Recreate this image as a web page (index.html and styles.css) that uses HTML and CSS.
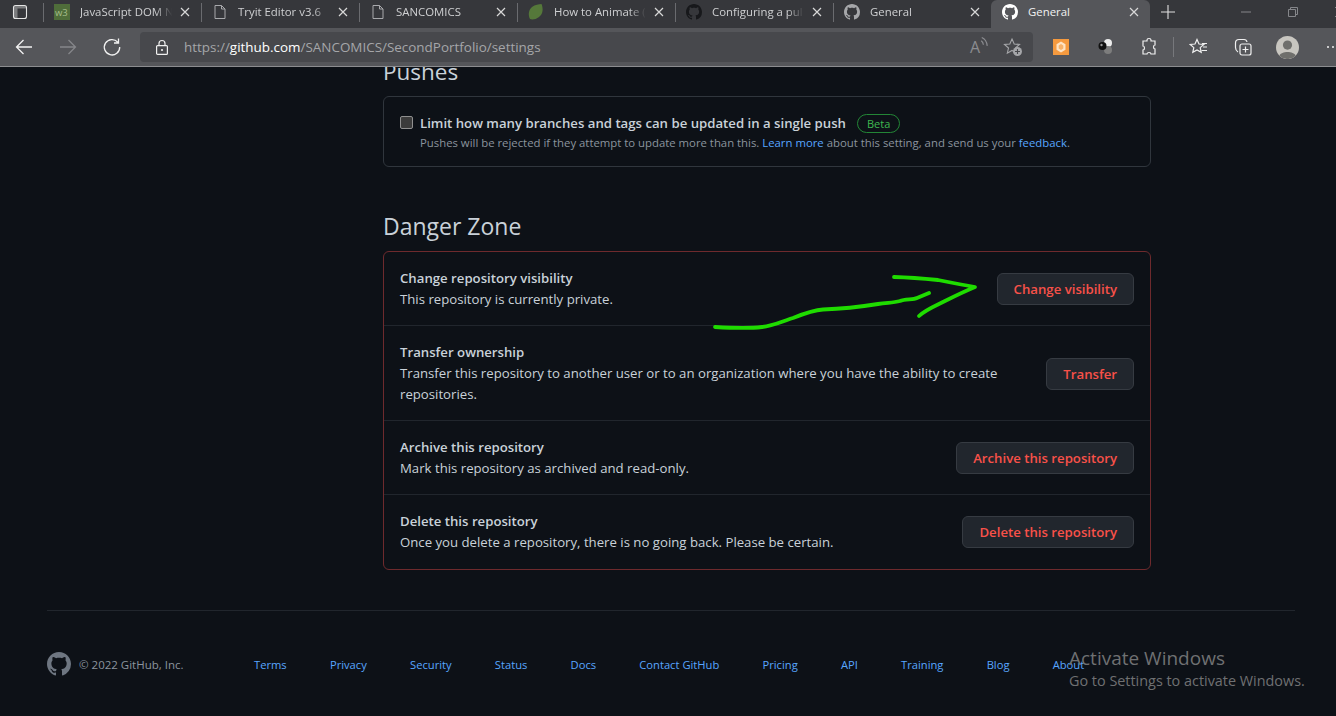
FILE: index.html
```html
<!DOCTYPE html>
<html lang="en">
<head>
<meta charset="utf-8">
<title>General</title>
<link rel="stylesheet" href="styles.css">
</head>
<body>
<svg class="defs" width="0" height="0" aria-hidden="true">
  <symbol id="gh" viewBox="0 0 16 16"><path fill="currentColor" d="M8 0C3.58 0 0 3.58 0 8c0 3.54 2.29 6.53 5.47 7.59.4.07.55-.17.55-.38 0-.19-.01-.82-.01-1.49-2.01.37-2.53-.49-2.69-.94-.09-.23-.48-.94-.82-1.13-.28-.15-.68-.52-.01-.53.63-.01 1.08.58 1.23.82.72 1.21 1.87.87 2.33.66.07-.52.28-.87.51-1.07-1.78-.2-3.64-.89-3.64-3.95 0-.87.31-1.59.82-2.15-.08-.2-.36-1.02.08-2.12 0 0 .67-.21 2.2.82.64-.18 1.32-.27 2-.27.68 0 1.36.09 2 .27 1.53-1.04 2.2-.82 2.2-.82.44 1.1.16 1.92.08 2.12.51.56.82 1.27.82 2.15 0 3.07-1.87 3.75-3.65 3.95.29.25.54.73.54 1.48 0 1.07-.01 1.93-.01 2.2 0 .21.15.46.55.38A8.013 8.013 0 0016 8c0-4.42-3.58-8-8-8z"/></symbol>
  <symbol id="doc" viewBox="0 0 16 16"><path fill="none" stroke="currentColor" d="M3 1.500h6.500L13 5v9.500H3zM9.500 1.500V5H13"/></symbol>
  <symbol id="x" viewBox="0 0 10 10"><path fill="none" stroke="currentColor" stroke-width="1.200" d="M1 1l8 8M9 1l-8 8"/></symbol>
</svg>

<header class="chrome">
  <div class="tabstrip">
    <div class="strip-start">
      <svg class="ico16" viewBox="0 0 16 16"><rect x="1.500" y="1.500" width="13" height="13" rx="2" fill="none" stroke="#e4e4e4" stroke-width="1.100"/><path d="M2 2h12v2.500H5.500V14H2z" fill="#e4e4e4" opacity=".4"/></svg>
    </div>
    <div class="tab">
      <svg class="ico16" viewBox="0 0 16 16"><rect width="16" height="16" fill="#4f6d3a"/><text x="1" y="11.500" class="w3">w3</text></svg>
      <span class="tab-title">JavaScript DOM N</span>
      <svg class="tab-x"><use href="#x"/></svg>
    </div>
    <div class="tab">
      <svg class="ico16 muted"><use href="#doc"/></svg>
      <span class="tab-title">Tryit Editor v3.6</span>
      <svg class="tab-x"><use href="#x"/></svg>
    </div>
    <div class="tab">
      <svg class="ico16 muted"><use href="#doc"/></svg>
      <span class="tab-title">SANCOMICS</span>
      <svg class="tab-x"><use href="#x"/></svg>
    </div>
    <div class="tab">
      <svg class="ico16" viewBox="0 0 16 16"><path d="M13.500 0C15.500 5 15 10 11 13 8 15.500 4 16 2 15 0 11 .5 6 4 3 7 .5 11 .5 13.500 0z" fill="#55783a"/></svg>
      <span class="tab-title">How to Animate (</span>
      <svg class="tab-x"><use href="#x"/></svg>
    </div>
    <div class="tab">
      <svg class="ico16 gh-dark"><use href="#gh"/></svg>
      <span class="tab-title">Configuring a pul</span>
      <svg class="tab-x"><use href="#x"/></svg>
    </div>
    <div class="tab">
      <svg class="ico16 gh-grey"><use href="#gh"/></svg>
      <span class="tab-title">General</span>
      <svg class="tab-x"><use href="#x"/></svg>
    </div>
    <div class="tab tab-active">
      <svg class="ico16 gh-white"><use href="#gh"/></svg>
      <span class="tab-title">General</span>
      <svg class="tab-x"><use href="#x"/></svg>
    </div>
    <div class="new-tab">
      <svg class="ico16" viewBox="0 0 16 16"><path d="M8 1v14M1 8h14" stroke="#e0e0e0" stroke-width="1.100" fill="none"/></svg>
    </div>
    <div class="win-controls">
      <svg class="ico12" viewBox="0 0 12 12"><path d="M1 6h10" stroke="#85868a"/></svg>
      <svg class="ico12" viewBox="0 0 12 12"><path d="M1.500 3.500h7v7h-7zM3.500 3.500v-2h7v7h-2" stroke="#85868a" fill="none"/></svg>
      <svg class="ico12" viewBox="0 0 12 12"><path d="M1 1l10 10M11 1L1 11" stroke="#85868a" fill="none"/></svg>
    </div>
  </div>

  <div class="toolbar">
    <div class="tool"><svg class="ico20" viewBox="0 0 20 20"><path d="M18 10H2.500M9.500 3l-7 7 7 7" fill="none" stroke="#f2f2f2" stroke-width="1.300"/></svg></div>
    <div class="tool"><svg class="ico20" viewBox="0 0 20 20"><path d="M2 10h15.500M10.500 3l7 7-7 7" fill="none" stroke="#85868a" stroke-width="1.300"/></svg></div>
    <div class="tool"><svg class="ico20" viewBox="0 0 20 20"><path d="M15.800 5.200A7.700 7.700 0 1 0 17.700 10M16.500 1.500v4.500H12" fill="none" stroke="#f2f2f2" stroke-width="1.300"/></svg></div>
    <div class="address">
      <svg class="lock" viewBox="0 0 14 16"><path d="M4 7V4.500a3 3 0 0 1 6 0V7" fill="none" stroke="#f0f0f0" stroke-width="1.200"/><rect x="1.600" y="6.600" width="10.800" height="8.800" rx="1" fill="none" stroke="#f0f0f0" stroke-width="1.200"/><circle cx="7" cy="11" r="1.100" fill="#f0f0f0"/></svg>
      <span class="url"><span class="url-dim">https://</span><span class="url-host">github.com</span><span class="url-dim">/SANCOMICS/SecondPortfolio/settings</span></span>
      <span class="read-aloud">A<svg class="waves" viewBox="0 0 8 10"><path d="M1 3.500c1.200.8 1.800 1.800 2 3.500M1.500.5C4 1.500 6 4 6.500 8" fill="none" stroke="#8b8c90" stroke-width="1.100"/></svg></span>
      <svg class="ico20" viewBox="0 0 20 20"><path d="M9 2l2.200 5 5.300.5-4 3.500 1.200 5.200L9 13.500 4.300 16.200 5.500 11l-4-3.500L6.800 7z" fill="none" stroke="#a5a6a9" stroke-width="1.100"/><circle cx="14.500" cy="14.500" r="4.500" fill="#a5a6a9"/><path d="M14.500 12v5M12 14.500h5" stroke="#47484c" stroke-width="1.100"/></svg>
    </div>
    <div class="tool tool-first"><svg class="ico16" viewBox="0 0 16 16"><rect width="16" height="16" fill="#f59a3f"/><path d="M8 2.500l4.500 2.700v5.600L8 13.500l-4.500-2.700V5.200z" fill="#fde3c4"/><path d="M8 5l2.300 1.500v3L8 11 5.700 9.500v-3z" fill="#f7b26a"/></svg></div>
    <div class="tool"><svg class="ico20" viewBox="0 0 20 20"><circle cx="13" cy="6" r="4" fill="#ececec"/><circle cx="13" cy="13" r="4" fill="#7d7d7d"/><circle cx="7.500" cy="9" r="4" fill="#111"/><circle cx="6.500" cy="8" r="1.200" fill="#999"/></svg></div>
    <div class="tool"><svg class="ico20" viewBox="0 0 20 20"><path d="M8 3c0-2 4-2 4 0v1h4v4c-2 0-2 4 0 4v5h-4c0-2-4-2-4 0H4v-4c2 0 2-4 0-4V4h4z" fill="none" stroke="#f0f0f0" stroke-width="1.200"/></svg></div>
    <span class="tool-sep"></span>
    <div class="tool"><svg class="ico20" viewBox="0 0 20 20"><path d="M8 2.500l2 4.500 4.800.4-3.600 3.200 1 4.700L8 12.900 3.800 15.300l1-4.700L1.200 7.400 6 7z" fill="none" stroke="#f0f0f0" stroke-width="1.200"/><path d="M13 6.500h5M14 10h4M12.500 13.500h5.500" stroke="#f0f0f0" stroke-width="1.100"/></svg></div>
    <div class="tool"><svg class="ico20" viewBox="0 0 20 20"><path d="M5 15C3.500 14 2.500 12.500 2.500 10.500V6A3.500 3.500 0 0 1 6 2.500h5A3 3 0 0 1 14 5" fill="none" stroke="#f0f0f0" stroke-width="1.200"/><rect x="7" y="7" width="11" height="11" rx="2" fill="none" stroke="#f0f0f0" stroke-width="1.200"/><path d="M12.500 9.500v6M9.500 12.500h6" stroke="#f0f0f0" stroke-width="1.200"/></svg></div>
    <div class="tool"><svg class="avatar" viewBox="0 0 24 24"><circle cx="12" cy="12" r="12" fill="#c8c6c0"/><circle cx="12" cy="9.500" r="4.800" fill="#6f6f6c"/><path d="M3.500 20.500c2-5 15-5 17 0A12 12 0 0 1 3.500 20.500z" fill="#6f6f6c"/></svg></div>
    <div class="tool tool-more"><span class="dot"></span><span class="dot"></span><span class="dot"></span></div>
  </div>
</header>

<div class="viewport">
  <main class="content">
    <h2 class="section-title">Pushes</h2>
    <section class="box">
      <div class="push-row">
        <span class="checkbox"></span>
        <div class="push-text">
          <div class="push-label"><strong>Limit how many branches and tags can be updated in a single push</strong><span class="beta">Beta</span></div>
          <p class="note">Pushes will be rejected if they attempt to update more than this. <a href="#">Learn more</a> about this setting, and send us your <a href="#">feedback</a>.</p>
        </div>
      </div>
    </section>

    <h2 class="section-title danger-title">Danger Zone</h2>
    <section class="box danger-box">
      <div class="danger-row">
        <div class="danger-text"><strong>Change repository visibility</strong><p>This repository is currently private.</p></div>
        <button class="btn-danger">Change visibility</button>
      </div>
      <div class="danger-row">
        <div class="danger-text danger-text-wrap"><strong>Transfer ownership</strong><p>Transfer this repository to another user or to an organization where you have the ability to create repositories.</p></div>
        <button class="btn-danger">Transfer</button>
      </div>
      <div class="danger-row">
        <div class="danger-text"><strong>Archive this repository</strong><p>Mark this repository as archived and read-only.</p></div>
        <button class="btn-danger">Archive this repository</button>
      </div>
      <div class="danger-row">
        <div class="danger-text"><strong>Delete this repository</strong><p>Once you delete a repository, there is no going back. Please be certain.</p></div>
        <button class="btn-danger">Delete this repository</button>
      </div>
    </section>
  </main>

  <footer class="footer">
    <div class="footer-brand">
      <svg class="footer-logo"><use href="#gh"/></svg>
      <span>© 2022 GitHub, Inc.</span>
    </div>
    <nav class="footer-links">
      <a href="#">Terms</a><a href="#">Privacy</a><a href="#">Security</a><a href="#">Status</a><a href="#">Docs</a><a href="#">Contact GitHub</a><a href="#">Pricing</a><a href="#">API</a><a href="#">Training</a><a href="#">Blog</a><a href="#">About</a>
    </nav>
  </footer>

  <svg class="scribble" viewBox="0 0 280 60" aria-hidden="true">
    <path d="M2 54 C20 55 40 55 49 54 C60 53 70 48 80 45 C90 41 100 37 110 36.500 C125 36 140 35 165 31 C175 29.500 180 30 187 28 C192 25.500 200 27 204 25 L216 20" />
    <path d="M181 4 C200 4.500 215 6 225 7 C240 10 250 12 262 14 C250 19 240 24 232 28 C222 33 212 37 206 43" />
  </svg>

  <div class="activate">
    <div class="activate-title">Activate Windows</div>
    <div class="activate-sub">Go to Settings to activate Windows.</div>
  </div>
</div>
</body>
</html>
```

FILE: styles.css
```css
* { box-sizing: border-box; }
html, body { margin: 0; height: 100%; }
body {
  display: flex;
  flex-direction: column;
  height: 716px;
  overflow: hidden;
  background: #0d1117;
  color: #c9d1d9;
  font-family: "Open Sans", "Noto Sans", sans-serif;
  font-size: 13.200px;
  line-height: 21px;
}
.defs { position: absolute; }
.ico16 { width: 16px; height: 16px; flex: none; }
.ico12 { width: 12px; height: 12px; flex: none; }
.ico20 { width: 20px; height: 20px; flex: none; }

.chrome { flex: none; position: relative; z-index: 2; }
.tabstrip {
  display: flex;
  height: 28px;
  background: #36373b;
  overflow: hidden;
}
.strip-start { width: 43px; flex: none; display: flex; align-items: center; padding: 0 0 4px 12px; }
.tab {
  width: 158px;
  flex: none;
  display: flex;
  align-items: center;
  height: 28px;
  padding: 0 10px 4px 11px;
  color: #cfd0d2;
  font-size: 11.400px;
  position: relative;
}
.tab::before {
  content: "";
  position: absolute;
  left: 0;
  top: 3px;
  bottom: 6px;
  width: 1px;
  background: #6a6b6f;
}
.tab-title {
  flex: 1;
  min-width: 0;
  margin: 0 0 2px 10px;
  white-space: nowrap;
  -webkit-mask-image: linear-gradient(to right, #000 80%, transparent 98%);
  mask-image: linear-gradient(to right, #000 80%, transparent 98%);
}
.tab-x { width: 10px; height: 10px; flex: none; margin-left: 6px; margin-right: 1px; color: #d8d8d8; }
.tab-active {
  width: 159px;
  background: #55565a;
  color: #f2f2f2;
  border-radius: 6px 6px 0 0;
}
.tab-active::before { display: none; }
.tab-active .tab-title { -webkit-mask-image: none; mask-image: none; }
.muted { color: #a8a9ac; }
.gh-dark { color: #17181b; }
.gh-grey { color: #a6a7aa; }
.gh-white { color: #fff; }
.w3 { font-size: 9.500px; fill: #a5bd8a; font-family: "Open Sans", sans-serif; }
.new-tab { width: 35px; flex: none; display: flex; align-items: center; justify-content: center; padding-bottom: 4px; }
.win-controls { flex: 1; display: flex; align-items: center; gap: 35px; padding: 0 0 4px 55px; }

.toolbar {
  display: flex;
  align-items: center;
  height: 39px;
  padding-left: 2px;
  background: #55565a;
  border-bottom: 1px solid #8c8d90;
  overflow: hidden;
}
.tool { width: 44px; flex: none; display: flex; align-items: center; justify-content: center; }
.tool-first { margin-left: 6px; }
.tool-sep { width: 1px; height: 20px; flex: none; background: #77787c; margin: 0 3px 0 2px; }
.tool-more { gap: 3px; margin-left: 2px; }
.dot { width: 2px; height: 2px; flex: none; background: #f0f0f0; border-radius: 50%; }
.avatar { width: 23px; height: 23px; }
.address {
  width: 893px;
  height: 30px;
  flex: none;
  margin-left: 6px;
  display: flex;
  align-items: center;
  padding: 0 10px 0 15px;
  background: #47484c;
  border-radius: 4px;
}
.lock { width: 14px; height: 16px; flex: none; }
.url { flex: 1; margin-left: 15px; font-size: 13.450px; white-space: nowrap; }
.url-dim { color: #a5a6a9; }
.url-host { color: #fff; }
.read-aloud { position: relative; color: #8b8c90; font-size: 16px; margin-right: 19px; padding-right: 4px; }
.waves { position: absolute; right: -5px; top: 0; width: 9px; height: 11px; }

.viewport { flex: 1; position: relative; overflow: hidden; }
.content { width: 768px; margin: -13px 0 0 383px; }
.section-title {
  margin: 0 0 6px;
  font-size: 22.500px;
  line-height: 36px;
  font-weight: 400;
  height: 36px;
}
.danger-title { margin: 41px 0 7px; font-size: 23px; }
.box { border: 1px solid #30363d; border-radius: 6px; }
.push-row { display: flex; padding: 16px; height: 69px; }
.checkbox {
  width: 13px;
  height: 13px;
  margin: 3px 7px 0 0;
  flex: none;
  background: #3b3b3b;
  border: 1px solid #8f8f8f;
  border-radius: 2px;
}
.push-label { display: flex; align-items: center; height: 21px; }
.push-label strong { font-weight: 600; }
.beta {
  margin-left: 11px;
  height: 19px;
  padding: 0 9px;
  line-height: 17px;
  font-size: 11px;
  font-weight: 500;
  color: #3fb950;
  border: 1px solid #238636;
  border-radius: 10px;
}
.note { margin: 0; font-size: 11.350px; line-height: 18px; color: #8b949e; }
.note a, .footer-links a { color: #58a6ff; text-decoration: none; }
.danger-box { border-color: #6e2a2d; }
.danger-row {
  display: flex;
  align-items: center;
  justify-content: space-between;
  padding: 14px 16px 15px;
  border-top: 1px solid #21262d;
}
.danger-row:first-child { border-top: 0; }
.danger-row:last-child { padding-bottom: 16px; }
.danger-text { padding-top: 2px; }
.danger-text strong { font-weight: 600; display: block; }
.danger-text p { margin: 0; }
.danger-text-wrap { width: 610px; }
.btn-danger {
  height: 32px;
  margin-top: 2px;
  padding: 0 16px;
  flex: none;
  font: 600 13.200px/20px "Open Sans", sans-serif;
  color: #f85149;
  background: #21262d;
  border: 1px solid #363b42;
  border-radius: 6px;
}

.footer {
  display: flex;
  align-items: center;
  margin: 40px 41px 0 47px;
  padding-top: 41px;
  border-top: 1px solid #21262d;
  font-size: 11.200px;
  color: #8b949e;
}
.footer-brand { display: flex; align-items: center; gap: 8px; width: 207px; flex: none; font-size: 11.500px; }
.footer-logo { width: 24px; height: 24px; color: #6e7681; }
.footer-links { display: flex; gap: 43.200px; white-space: nowrap; }

.scribble {
  position: absolute;
  left: 713px;
  top: 206px;
  width: 280px;
  height: 60px;
  pointer-events: none;
}
.scribble path { fill: none; stroke: #1fdc00; stroke-width: 3.800; stroke-linecap: round; stroke-linejoin: round; }

.activate { position: absolute; left: 1069px; top: 579px; color: #6f7072; white-space: nowrap; }
.activate-title { font-size: 19px; line-height: 25px; }
.activate-sub { font-size: 14.400px; line-height: 20px; }
```
